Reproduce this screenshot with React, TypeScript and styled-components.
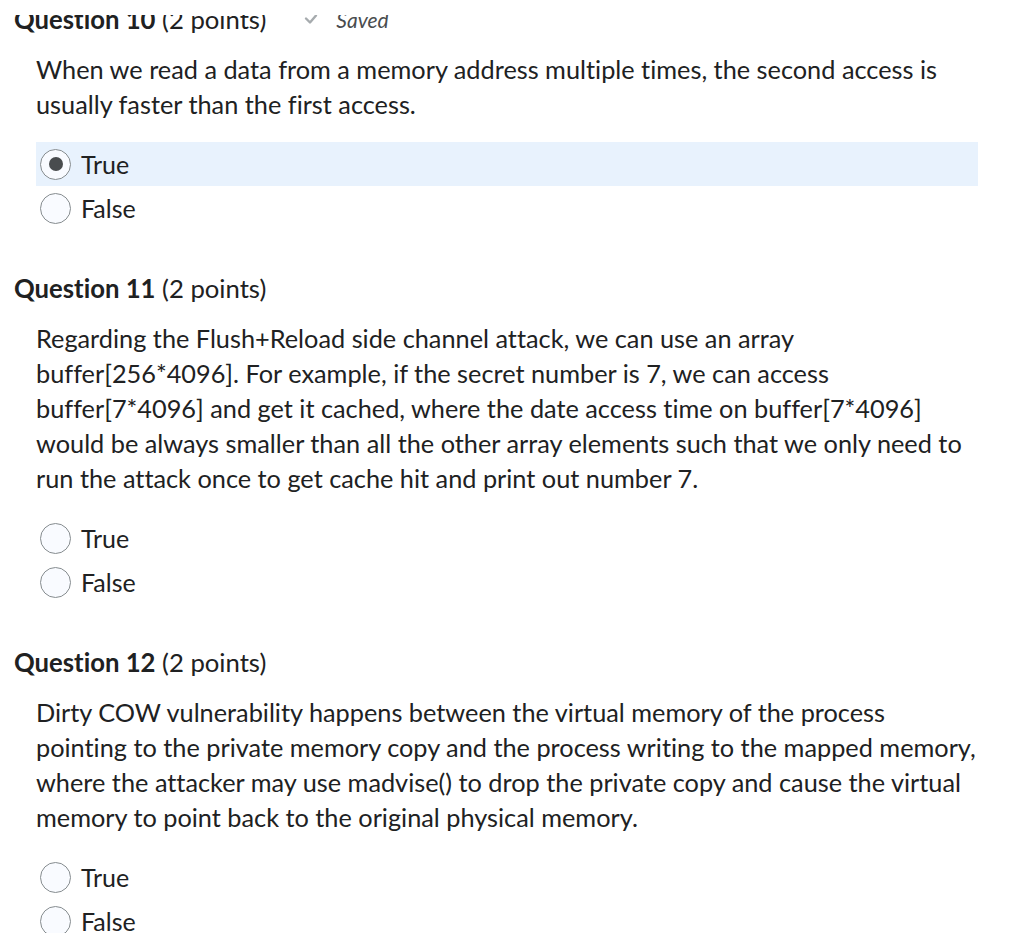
import React from 'react';
import styled, { createGlobalStyle } from 'styled-components';

const GlobalStyle = createGlobalStyle`
  html, body {
    margin: 0;
    padding: 0;
    background: #ffffff;
  }
  body {
    font-family: Lato, 'Open Sans', sans-serif;
    font-variant-ligatures: none;
    color: #202122;
    overflow: hidden;
  }
`;

const TopMask = styled.div`
  position: fixed;
  top: 0;
  left: 0;
  right: 0;
  height: 15px;
  background: #ffffff;
  z-index: 5;
`;

const Page = styled.div`
  padding: 1px 46px 0 14px;
  display: flex;
  flex-direction: column;
  gap: 40px;
`;

const Question = styled.section`
  display: flex;
  flex-direction: column;
`;

const HeadingRow = styled.div`
  display: flex;
  align-items: center;
  gap: 38px;
  height: 36px;
`;

const Heading = styled.h2`
  margin: 0;
  font-size: 25.7px;
  font-weight: 400;
  line-height: 36px;
  color: #202122;

  strong {
    font-weight: 700;
  }
`;

const SavedTag = styled.span`
  display: inline-flex;
  align-items: center;
  gap: 18px;
  font-size: 21px;
  font-style: italic;
  color: #494c4e;
`;

const Body = styled.p`
  margin: 15px 0 0 22px;
  font-size: 25.3px;
  line-height: 35px;
`;

const Options = styled.div`
  margin: 20px 0 0 22px;
  display: flex;
  flex-direction: column;
`;

const OptionRow = styled.label<{ selected?: boolean }>`
  display: flex;
  align-items: center;
  gap: 10px;
  height: 44px;
  padding-left: 4px;
  font-size: 25px;
  background: ${p => (p.selected ? '#e8f2fd' : 'transparent')};
`;

const Radio = styled.span<{ checked?: boolean }>`
  box-sizing: border-box;
  width: 31px;
  height: 31px;
  border-radius: 50%;
  border: 1.5px solid #868c8f;
  background: #f9fbff;
  display: flex;
  align-items: center;
  justify-content: center;

  &::after {
    content: '';
    width: 14px;
    height: 14px;
    border-radius: 50%;
    background: ${p => (p.checked ? '#494c4e' : 'transparent')};
  }
`;

type Q = {
  num: number;
  text: string;
  answer?: 'True' | 'False';
  saved?: boolean;
};

const questions: Q[] = [
  {
    num: 10,
    text: 'When we read a data from a memory address multiple times, the second access is usually faster than the first access.',
    answer: 'True',
    saved: true,
  },
  {
    num: 11,
    text: 'Regarding the Flush+Reload side channel attack, we can use an array buffer[256*4096]. For example, if the secret number is 7, we can access buffer[7*4096] and get it cached, where the date access time on buffer[7*4096] would be always smaller than all the other array elements such that we only need to run the attack once to get cache hit and print out number 7.',
  },
  {
    num: 12,
    text: 'Dirty COW vulnerability happens between the virtual memory of the process pointing to the private memory copy and the process writing to the mapped memory, where the attacker may use madvise() to drop the private copy and cause the virtual memory to point back to the original physical memory.',
  },
];

const Check = () => (
  <svg width="14" height="12" viewBox="0 0 14 12">
    <path d="M2 5.5 L6 9.5 L12 2.5" fill="none" stroke="#a6abae" strokeWidth="2.4" strokeLinecap="round" strokeLinejoin="round" />
  </svg>
);

export default function App() {
  return (
    <>
      <GlobalStyle />
      <TopMask />
      <Page>
        {questions.map(q => (
          <Question key={q.num}>
            <HeadingRow>
              <Heading>
                <strong>Question {q.num}</strong> (2 points)
              </Heading>
              {q.saved && (
                <SavedTag>
                  <Check />
                  Saved
                </SavedTag>
              )}
            </HeadingRow>
            <Body>{q.text}</Body>
            <Options>
              {(['True', 'False'] as const).map(opt => (
                <OptionRow key={opt} selected={q.answer === opt}>
                  <Radio checked={q.answer === opt} />
                  {opt}
                </OptionRow>
              ))}
            </Options>
          </Question>
        ))}
      </Page>
    </>
  );
}
